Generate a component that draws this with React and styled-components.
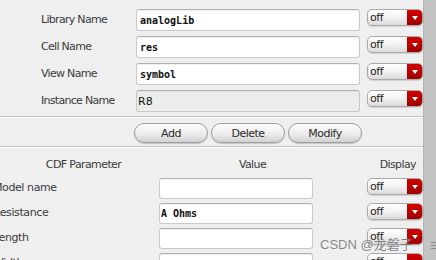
import React from "react";
import styled, { createGlobalStyle } from "styled-components";

const Global = createGlobalStyle`
  html, body { margin: 0; padding: 0; background: #efefef; overflow: hidden; }
  body { font-family: "DejaVu Sans", sans-serif; }
`;

const Page = styled.div`
  display: flex;
  align-items: flex-start;
  width: 436px;
  height: 260px;
  overflow: hidden;
  position: relative;
  background: #efefef;
`;

const Main = styled.div`
  width: 423px;
  flex: none;
  display: flex;
  flex-direction: column;
  & > * {
    flex: none;
  }
`;

const ScrollStrip = styled.div`
  flex: 1;
  align-self: stretch;
  background: #c3c3c3;
  border-left: 1px solid #b4b4b4;
  position: relative;
`;

const Grip = styled.div`
  position: absolute;
  left: 7px;
  top: 242px;
  width: 5px;
  height: 7px;
  background: repeating-linear-gradient(
    to bottom,
    #8a8a8a 0 1px,
    transparent 1px 3px
  );
`;

const TopGrid = styled.div`
  display: grid;
  grid-template-columns: 88px 224px 56px;
  column-gap: 7px;
  row-gap: 5px;
  padding: 9px 0 0 41px;
  align-items: start;
`;

const Label = styled.div`
  height: 22px;
  line-height: 22px;
  font-size: 11px;
  letter-spacing: -0.7px;
  color: #3a3a3a;
  white-space: nowrap;
`;

const Input = styled.div`
  box-sizing: border-box;
  height: ${(p) => (p.$h ? p.$h : 22)}px;
  background: ${(p) => (p.$disabled ? "#ededed" : "#ffffff")};
  border: 1px solid #c9c9c9;
  border-top-color: #b0b0b0;
  border-radius: 3px;
  box-shadow: inset 0 1px 1px rgba(0, 0, 0, 0.06);
  padding-left: ${(p) => (p.$pad ? p.$pad : 3)}px;
  display: flex;
  align-items: center;
  font-family: ${(p) =>
    p.$sans ? `"DejaVu Sans", sans-serif` : `"DejaVu Sans Mono", monospace`};
  font-weight: ${(p) => (p.$bold ? 700 : 400)};
  font-size: ${(p) => (p.$sans ? 11 : 10)}px;
  color: #111;
  white-space: pre;
`;

const Combo = styled.div`
  box-sizing: border-box;
  width: 56px;
  height: 17px;
  display: flex;
  border: 1px solid #a9a9a9;
  border-radius: 5px;
  overflow: hidden;
  background: linear-gradient(#ffffff, #f3f3f3 50%, #d9d9d9);
  box-shadow: 0 1px 1px rgba(0, 0, 0, 0.12);
`;

const ComboText = styled.div`
  flex: 1;
  font-size: 11px;
  letter-spacing: -0.4px;
  line-height: 15px;
  padding-left: 2px;
  color: #222;
`;

const ComboArrow = styled.div`
  width: 15px;
  background: linear-gradient(#d40000, #b80000 60%, #9a0000);
  display: flex;
  align-items: center;
  justify-content: center;
  &::after {
    content: "";
    border-left: 3px solid transparent;
    border-right: 3px solid transparent;
    border-top: 4px solid #ffffff;
  }
`;

const Separator = styled.div`
  height: 0;
  border-top: 1px solid #c4c4c4;
  border-bottom: 1px solid #fbfbfb;
  margin-top: ${(p) => p.$mt}px;
`;

const ButtonRow = styled.div`
  display: flex;
  gap: 3px;
  padding-left: 134px;
  margin-top: 5px;
  margin-bottom: 3px;
`;

const Button = styled.div`
  box-sizing: border-box;
  width: 74px;
  height: 20px;
  border: 1px solid #9f9f9f;
  border-radius: 10px;
  background: linear-gradient(#fdfdfd, #ececec 55%, #d2d2d2);
  box-shadow: 0 1px 1px rgba(0, 0, 0, 0.18);
  font-size: 11px;
  letter-spacing: -0.5px;
  color: #2a2a2a;
  display: flex;
  align-items: center;
  justify-content: center;
`;

const HeaderRow = styled.div`
  display: grid;
  grid-template-columns: 167px 171px 1fr;
  height: 30px;
  align-items: center;
  font-size: 11px;
  letter-spacing: -0.6px;
  color: #3a3a3a;
`;

const HeadCell = styled.div`
  text-align: ${(p) => p.$align || "center"};
  padding-right: ${(p) => p.$pr || 0}px;
  padding-top: 2px;
`;

const ParamGrid = styled.div`
  display: grid;
  grid-template-columns: 166px 154px 54px 56px;
  row-gap: 4px;
  margin-left: -7px;
  align-items: start;
`;

const ParamLabel = styled.div`
  height: 21px;
  line-height: 20px;
  font-size: 11px;
  letter-spacing: -0.4px;
  color: #3a3a3a;
  white-space: nowrap;
`;

const Watermark = styled.div`
  position: absolute;
  left: 320px;
  top: 234px;
  font-family: "Liberation Sans", "Noto Sans CJK SC", sans-serif;
  font-size: 13px;
  color: rgba(90, 90, 90, 0.75);
  text-shadow: 0 0 1px rgba(255, 255, 255, 0.8);
  white-space: nowrap;
`;

const topRows = [
  { label: "Library Name", value: "analogLib" },
  { label: "Cell Name", value: "res" },
  { label: "View Name", value: "symbol" },
  { label: "Instance Name", value: "R8", disabled: true },
];

const params = [
  { label: "Model name", value: "" },
  { label: "Resistance", value: "A Ohms" },
  { label: "Length", value: "" },
  { label: "Width", value: "" },
];

function Dropdown() {
  return (
    <Combo>
      <ComboText>off</ComboText>
      <ComboArrow />
    </Combo>
  );
}

export default function App() {
  return (
    <>
      <Global />
      <Page>
        <Main>
          <TopGrid>
            {topRows.map((r) => (
              <React.Fragment key={r.label}>
                <Label>{r.label}</Label>
                {r.disabled ? (
                  <Input $disabled $sans $pad={1}>
                    {r.value}
                  </Input>
                ) : (
                  <Input $bold $pad={3}>
                    {r.value}
                  </Input>
                )}
                <Dropdown />
              </React.Fragment>
            ))}
          </TopGrid>
          <Separator $mt={4} />
          <ButtonRow>
            <Button>Add</Button>
            <Button>Delete</Button>
            <Button>Modify</Button>
          </ButtonRow>
          <Separator $mt={0} />
          <HeaderRow>
            <HeadCell>CDF Parameter</HeadCell>
            <HeadCell>Value</HeadCell>
            <HeadCell $align="right" $pr={7}>
              Display
            </HeadCell>
          </HeaderRow>
          <ParamGrid>
            {params.map((p) => (
              <React.Fragment key={p.label}>
                <ParamLabel>{p.label}</ParamLabel>
                <Input $h={21} $pad={1} $bold>
                  {p.value}
                </Input>
                <span />
                <Dropdown />
              </React.Fragment>
            ))}
          </ParamGrid>
        </Main>
        <ScrollStrip>
          <Grip />
        </ScrollStrip>
        <Watermark>CSDN @龙磐子</Watermark>
      </Page>
    </>
  );
}
